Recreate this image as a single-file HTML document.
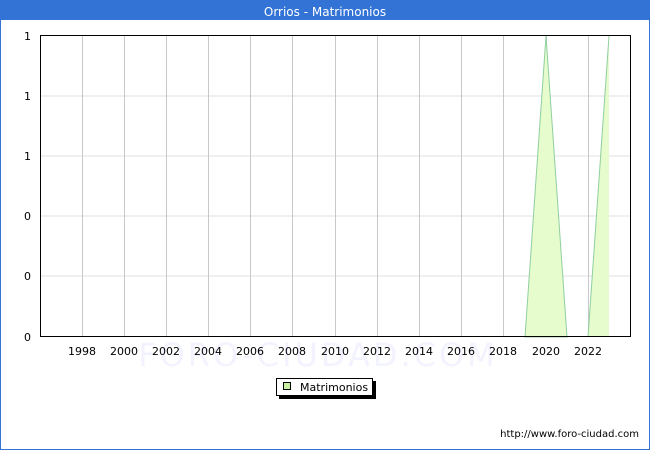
<!DOCTYPE html><html><head><style>
body{margin:0;width:650px;height:450px;overflow:hidden;font-family:"DejaVu Sans","Liberation Sans",sans-serif;background:#fff}
</style></head><body>
<svg width="650" height="450" xmlns="http://www.w3.org/2000/svg" style="position:absolute;left:0;top:0">
<rect x="0" y="0" width="650" height="450" fill="#3373d6"/>
<rect x="1" y="20" width="648" height="429" fill="#fff"/>
<text x="325" y="16" fill="#fff" font-size="12" text-anchor="middle">Orrios - Matrimonios</text>
<text x="318" y="366" fill="#f3f3ff" font-size="32" letter-spacing="3" text-anchor="middle">FORO-CIUDAD.COM</text>
<g stroke="#e0e0e0"><line x1="40" y1="96" x2="631" y2="96"/><line x1="40" y1="156" x2="631" y2="156"/><line x1="40" y1="216" x2="631" y2="216"/><line x1="40" y1="276" x2="631" y2="276"/></g>
<g stroke="#c8c8c8">
<line x1="82.5" y1="36" x2="82.5" y2="337"/><line x1="124.5" y1="36" x2="124.5" y2="337"/><line x1="166.5" y1="36" x2="166.5" y2="337"/><line x1="208.5" y1="36" x2="208.5" y2="337"/><line x1="250.5" y1="36" x2="250.5" y2="337"/><line x1="292.5" y1="36" x2="292.5" y2="337"/><line x1="335.5" y1="36" x2="335.5" y2="337"/><line x1="377.5" y1="36" x2="377.5" y2="337"/><line x1="419.5" y1="36" x2="419.5" y2="337"/><line x1="461.5" y1="36" x2="461.5" y2="337"/><line x1="503.5" y1="36" x2="503.5" y2="337"/><line x1="546.5" y1="36" x2="546.5" y2="337"/><line x1="588.5" y1="36" x2="588.5" y2="337"/>
</g>
<polygon points="525,337 546,36 567,337" fill="#e6fccc" stroke="#8fcfa0"/>
<polygon points="588,337 609,36 609,337" fill="#e6fccc"/>
<line x1="588" y1="337" x2="609" y2="36" stroke="#8fcfa0"/>
<rect x="40.5" y="35.5" width="590" height="301" fill="none" stroke="#000"/>
<g font-size="11" fill="#000" text-anchor="end">
<text x="31" y="40">1</text><text x="31" y="100">1</text><text x="31" y="160">1</text><text x="31" y="220">0</text><text x="31" y="280">0</text><text x="31" y="341">0</text></g>
<g font-size="11" fill="#000" text-anchor="middle">
<text x="82" y="355">1998</text><text x="124" y="355">2000</text><text x="166" y="355">2002</text><text x="208" y="355">2004</text><text x="250" y="355">2006</text><text x="292" y="355">2008</text><text x="335" y="355">2010</text><text x="377" y="355">2012</text><text x="419" y="355">2014</text><text x="461" y="355">2016</text><text x="503" y="355">2018</text><text x="546" y="355">2020</text><text x="588" y="355">2022</text></g>
<rect x="279" y="381" width="97" height="18" fill="#000"/>
<rect x="276.5" y="378.5" width="96" height="17" fill="#fff" stroke="#000"/>
<rect x="283.5" y="382.5" width="7" height="7" fill="#c8f0a0" stroke="#000"/>
<text x="300" y="391" font-size="11">Matrimonios</text>
<text x="639" y="437" font-size="10" text-anchor="end">http://www.foro-ciudad.com</text>
</svg>
</body></html>
